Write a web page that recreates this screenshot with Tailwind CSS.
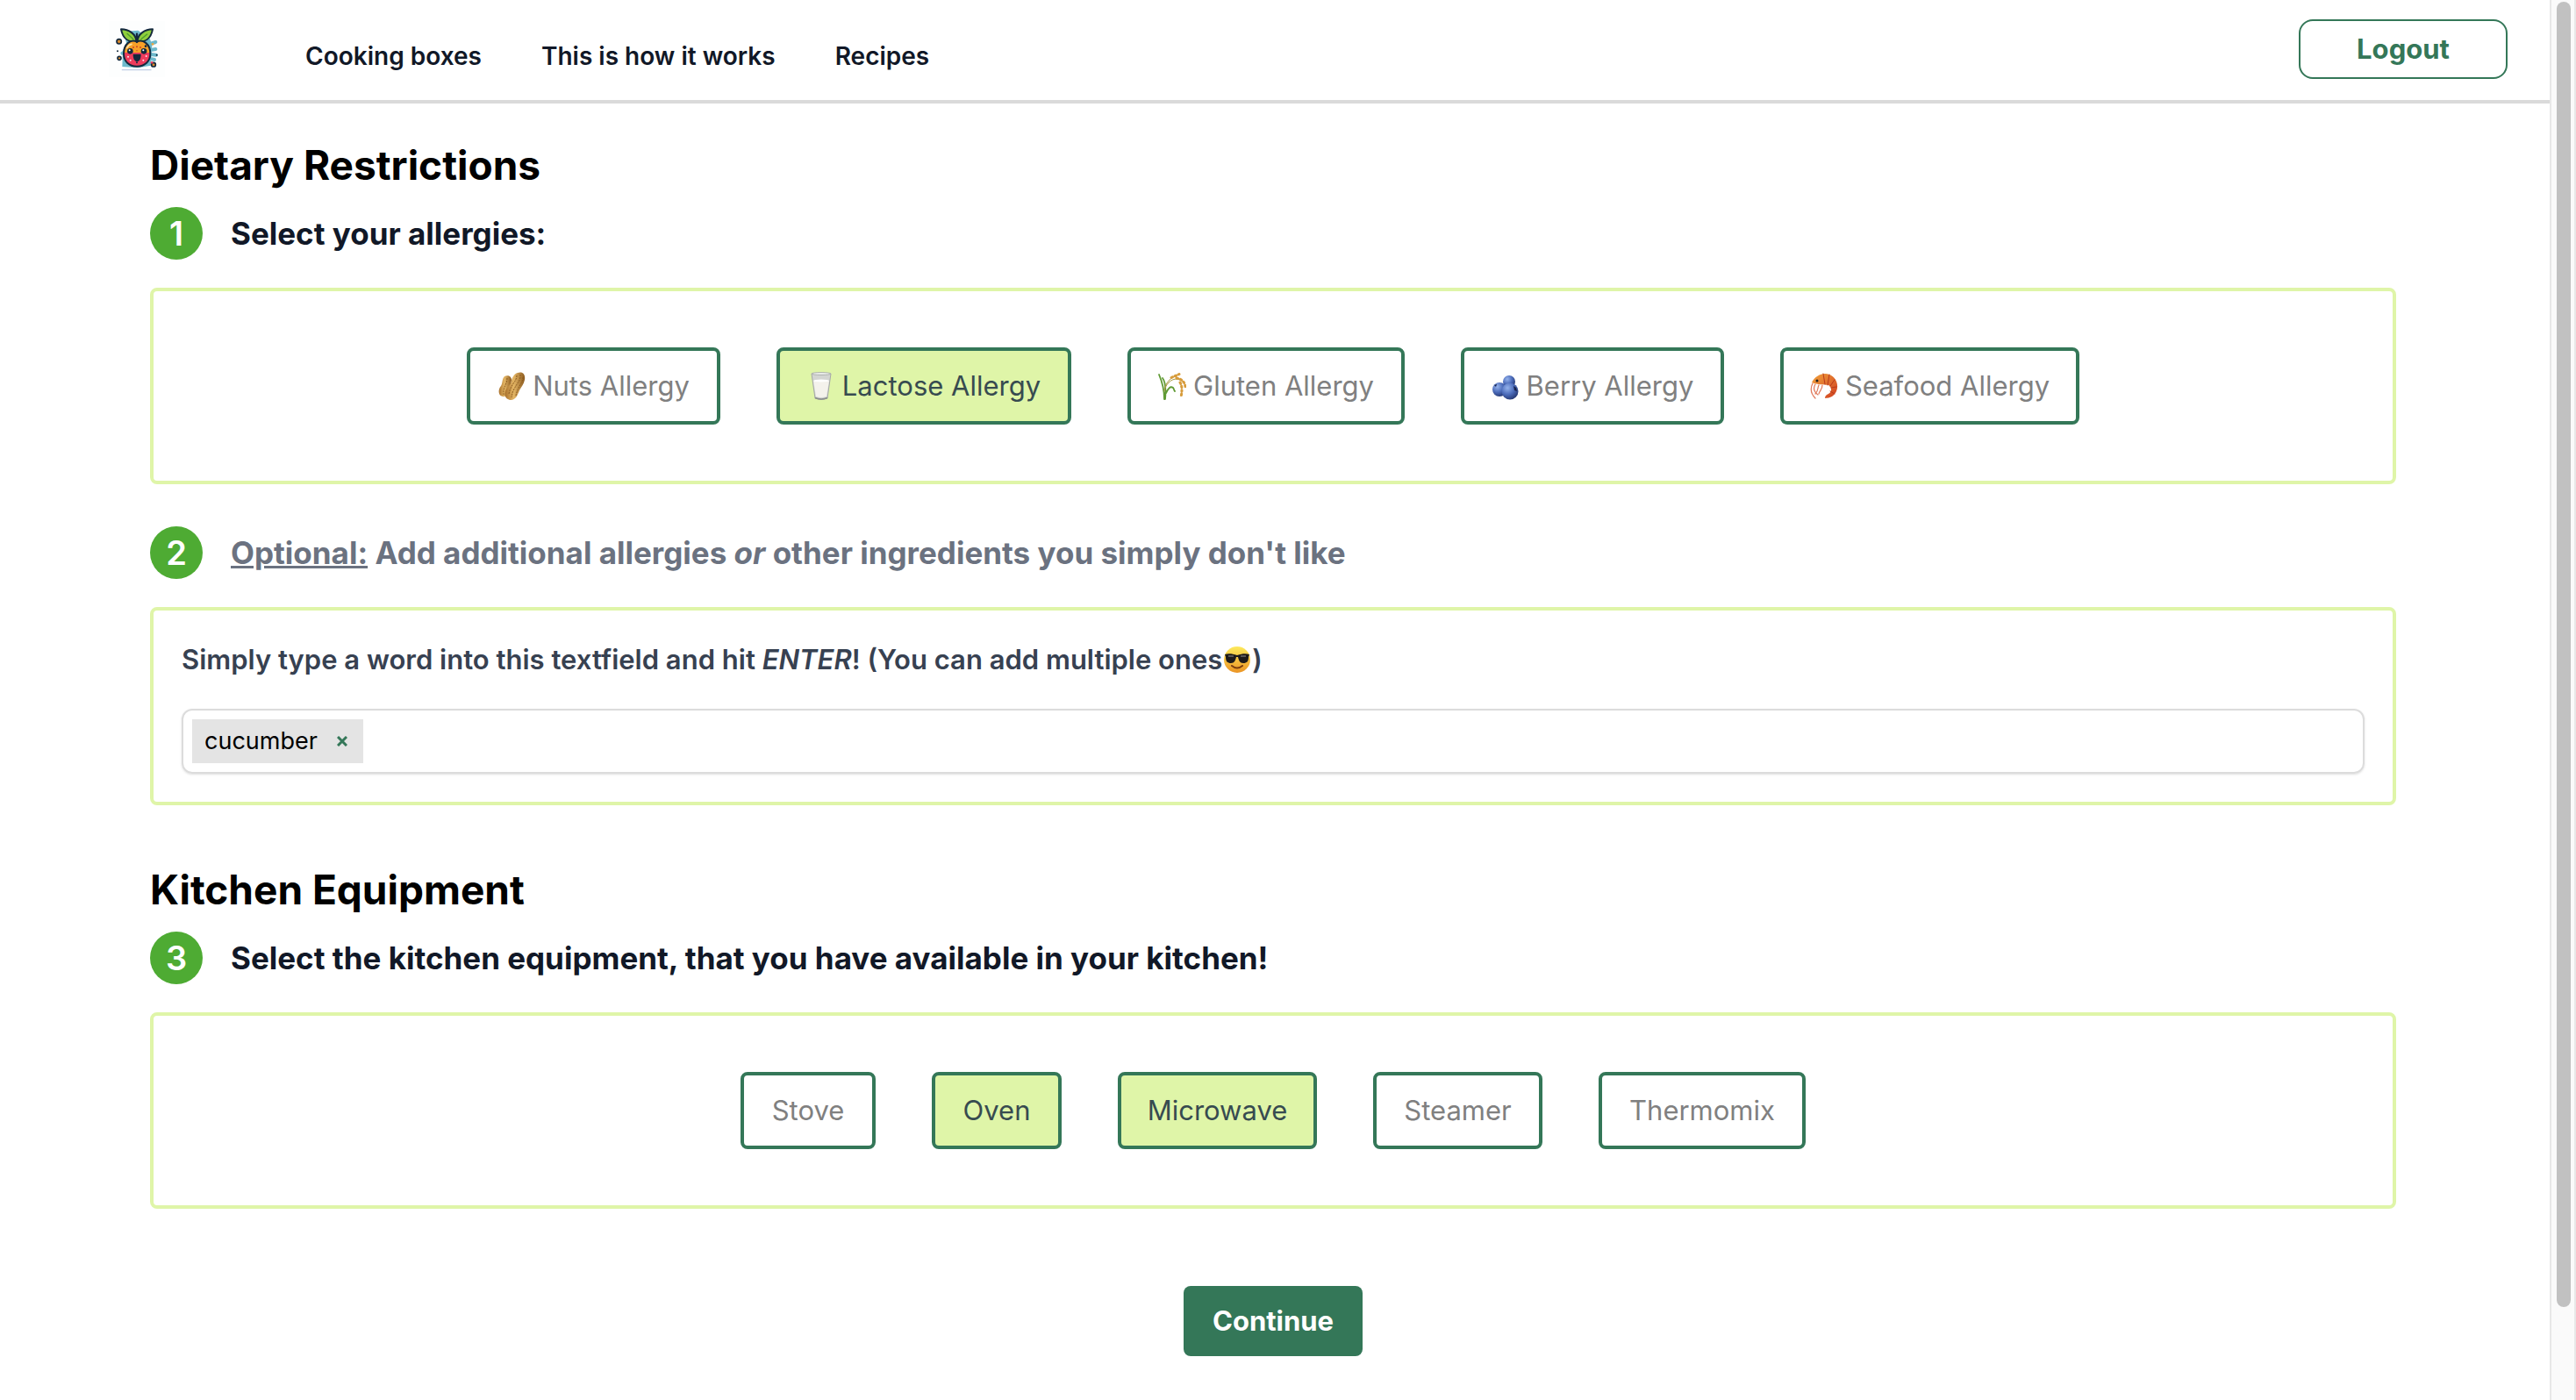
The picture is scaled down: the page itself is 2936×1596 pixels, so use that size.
<!DOCTYPE html>
<html lang="en">
<head>
<meta charset="utf-8">
<meta name="viewport" content="width=device-width, initial-scale=1">
<title>Dietary Restrictions</title>
<script src="https://cdn.jsdelivr.net/npm/@tailwindcss/browser@4"></script>
</head>
<body class="flex min-h-screen bg-white font-['Inter',sans-serif] text-[#111827]">

<div class="min-w-0 flex-1">
  <header class="flex h-[118px] items-start border-b-4 border-[#dadada] pr-12 pl-31">
    <a href="#" aria-label="Home" class="mt-6 mr-40 block size-16 shrink-0">
      <svg viewBox="0 0 192 192" class="size-full">
        <rect width="192" height="192" fill="#fdfefe"/>
        <g fill="none" stroke="#6db9cc" stroke-linecap="round" stroke-width="12">
          <path d="M142 78l18-6M148 98l12-2M144 114l18 2M50 108l-4 2M148 130l8 2"/>
        </g>
        <path d="M52 36 100 32 140 60 148 80 144 152 100 160 46 156 48 100 60 76Z" fill="#6db9cc"/>
        <path d="M42 28c26 0 52 16 52 42-26 4-46-10-52-42z" fill="#8fce3c" stroke="#14293d" stroke-width="6" stroke-linejoin="round"/>
        <path d="M150 28c-26 0-52 16-52 42 26 4 46-10 52-42z" fill="#8fce3c" stroke="#14293d" stroke-width="6" stroke-linejoin="round"/>
        <path d="M62 42 84 62M132 44 110 62" stroke="#4c9a2c" stroke-width="4"/>
        <path d="M96 71C76 60 51 78 51 112c0 26 18 43 45 43s46-17 46-43c0-34-26-52-46-41z" fill="#f8a028"/>
        <path d="M51 108c0 30 18 47 45 47s46-17 46-47z" fill="#ee3b5c"/>
        <path d="M62 92c4-8 10-12 16-13" stroke="#ffe1a0" stroke-width="5" fill="none" stroke-linecap="round"/>
        <path d="M96 71C76 60 51 78 51 112c0 26 18 43 45 43s46-17 46-43c0-34-26-52-46-41z" fill="none" stroke="#14293d" stroke-width="6"/>
        <path d="M96 72V44" stroke="#14293d" stroke-width="7" stroke-linecap="round"/>
        <circle cx="73" cy="103" r="10" fill="#14293d"/><circle cx="120" cy="103" r="10" fill="#14293d"/>
        <circle cx="71" cy="100" r="3" fill="#fff"/><circle cx="118" cy="100" r="3" fill="#fff"/>
        <path d="M83 113h27c0 16-5 25-13.500 25S83 129 83 113z" fill="#14293d"/>
        <g fill="#c8442a"><circle cx="84" cy="90" r="3"/><circle cx="96" cy="88" r="3"/><circle cx="108" cy="90" r="3"/><circle cx="96" cy="101" r="2"/></g>
        <g fill="#14293d"><circle cx="126" cy="86" r="4"/><circle cx="96" cy="142" r="3"/><circle cx="30" cy="103" r="3"/><circle cx="164" cy="116" r="3"/></g>
        <g fill="#ffe3ea"><circle cx="66" cy="122" r="3"/><circle cx="74" cy="134" r="3"/><circle cx="118" cy="134" r="3"/><circle cx="128" cy="120" r="3"/></g>
        <g fill="#d98a2e" stroke="#14293d" stroke-width="5"><circle cx="35" cy="70" r="8"/><circle cx="36" cy="127" r="6"/><circle cx="153" cy="149" r="7"/></g>
        <circle cx="147" cy="142" r="4" fill="#ee3b5c"/><circle cx="150" cy="79" r="4" fill="#f0a63c"/>
        <path d="M46 167h98" stroke="#c3cfe6" stroke-width="4" stroke-linecap="round"/>
      </svg>
    </a>
    <nav class="mt-11 flex gap-17 text-[28px] leading-10 font-semibold whitespace-nowrap">
      <a href="#">Cooking boxes</a>
      <a href="#">This is how it works</a>
      <a href="#">Recipes</a>
    </nav>
    <button type="button" class="mt-[22px] ml-auto h-[68px] w-[238px] rounded-2xl border-2 border-[#347758] text-[31px] leading-10 font-bold text-[#347758]">Logout</button>
  </header>

  <main class="pt-[38px] pr-1 pb-12">
    <div class="mx-auto max-w-[2560px]">
      <h1 class="text-[46px] leading-16 font-bold text-black">Dietary Restrictions</h1>

      <section class="mt-4">
        <div class="flex items-center gap-8">
          <span class="flex size-15 items-center justify-center rounded-full bg-[#4eab33] text-[38px] font-semibold text-white">1</span>
          <h2 class="text-[35px] leading-12 font-bold">Select your allergies:</h2>
        </div>
        <div class="mt-8 flex justify-center gap-16 rounded-lg border-4 border-[#dff5a8] py-16 text-[31px] whitespace-nowrap text-[#808080]">
          <button type="button" aria-pressed="false" class="flex h-22 w-[289px] items-center justify-center gap-2 rounded-lg border-4 border-[#347758]">
            <svg viewBox="0 0 32 32" class="size-8 shrink-0">
              <defs><linearGradient id="nut" x1="0" x2="1"><stop offset="0" stop-color="#a8712c"/><stop offset=".45" stop-color="#e3b564"/><stop offset="1" stop-color="#8c5a1e"/></linearGradient></defs>
              <path d="M8 5c4-2 8 0 8 4s-2 6-3 10c-1 5-3 10-7 9-6-1-5-9-2-12 2-3 1-8 4-11z" fill="url(#nut)"/>
              <path d="M23 1c6-2 9 2 8 8-1 5-4 8-6 12-2 5-4 11-10 11-8-1-8-9-4-14 2-3 4-3 5-8 1-4 3-8 7-9z" fill="url(#nut)"/>
              <path d="M26 3c1 9-8 12-10 26M29 6c0 7-6 10-8 21M22 4c0 7-7 10-9 21M11 7c0 7-5 10-4 19" stroke="#8a5a20" stroke-width="1" stroke-dasharray="2 1" fill="none"/>
            </svg>
            <span>Nuts Allergy</span>
          </button>
          <button type="button" aria-pressed="true" class="flex h-22 w-[336px] items-center justify-center gap-2 rounded-lg border-4 border-[#347758] bg-[#dff5a8] text-[#374b50]">
            <svg viewBox="0 0 32 32" class="size-8 shrink-0">
              <path d="M5 2h22l-4 28q-7 3-14 0z" fill="#d3d5d2" stroke="#a5a8a6"/>
              <path d="M7 10h18l-3 18q-6 2-12 0z" fill="#f4f2ec"/>
              <ellipse cx="16" cy="10" rx="9" ry="1.500" fill="#fff"/>
              <ellipse cx="16" cy="2" rx="11" ry="1.500" fill="#e9ebe9" stroke="#a5a8a6" stroke-width=".8"/>
              <path d="M9 29.500q7 3 14 0" stroke="#8b8e8c" stroke-width="1.500" fill="none"/>
            </svg>
            <span>Lactose Allergy</span>
          </button>
          <button type="button" aria-pressed="false" class="flex h-22 w-[316px] items-center justify-center gap-2 rounded-lg border-4 border-[#347758]">
            <svg viewBox="0 0 32 32" class="size-8 shrink-0" fill="none" stroke-linecap="round">
              <path d="M7 31C7 20 4 10 1 3M8 31C9 20 9 12 5 7M9 24c3-6 5-8 8-6 1 1 1 3 2 4" stroke="#5f9a34" stroke-width="1.800"/>
              <path d="M7 22C8 13 13 6 24 3M8 18C13 8 20 6 27 10" stroke="#a99a45" stroke-width="1"/>
              <path d="M15 6.500l9-4M21 7c6 1 10 5 10 11M25 12c3 5 2 11 1 17" stroke="#d79c3c" stroke-width="3" stroke-dasharray="1.500 3"/>
            </svg>
            <span>Gluten Allergy</span>
          </button>
          <button type="button" aria-pressed="false" class="flex h-22 w-[300px] items-center justify-center gap-2 rounded-lg border-4 border-[#347758]">
            <svg viewBox="0 0 32 32" class="size-8 shrink-0">
              <defs><radialGradient id="berry" cx=".35" cy=".3" r=".8"><stop offset="0" stop-color="#94b2ec"/><stop offset=".5" stop-color="#4c6cba"/><stop offset="1" stop-color="#1f2f66"/></radialGradient></defs>
              <circle cx="20" cy="11" r="7" fill="url(#berry)"/>
              <circle cx="9" cy="20" r="8" fill="url(#berry)"/>
              <circle cx="21" cy="22" r="9.500" fill="url(#berry)"/>
              <path d="M25 16l3 2 1 4-3-1zM3 15l3-1-1 3z" fill="#17224d"/>
            </svg>
            <span>Berry Allergy</span>
          </button>
          <button type="button" aria-pressed="false" class="flex h-22 w-[341px] items-center justify-center gap-2 rounded-lg border-4 border-[#347758]">
            <svg viewBox="0 0 32 32" class="size-8 shrink-0" fill="none" stroke-linecap="round">
              <defs><linearGradient id="shrimp" x1="0" y1="0" x2="1" y2="1"><stop offset="0" stop-color="#f2a33c"/><stop offset="1" stop-color="#cf3d20"/></linearGradient></defs>
              <path d="M2 12C6 4 15 0 22 3c8 3 11 12 8 19-2 5-7 8-13 8 0-3 2-4 4-5 4-2 4-8 0-10-6-1-12 0-19-3z" fill="url(#shrimp)"/>
              <path d="M15 2l2 12M22 3l-2 12M28 9l-5 7M30 17l-6 1M28 25l-5-3" stroke="#b83a1b" stroke-width="1"/>
              <path d="M3 13c-3 6-2 12 3 17M6 14c-3 5-1 9 3 12M10 15c-2 4 0 6-4 10M14 15c0 5-3 6-4 10" stroke="#e0785a" stroke-width="1.200"/>
              <circle cx="8" cy="10" r="1.500" fill="#222"/>
            </svg>
            <span>Seafood Allergy</span>
          </button>
        </div>
      </section>

      <section class="mt-12">
        <div class="flex items-center gap-8">
          <span class="flex size-15 items-center justify-center rounded-full bg-[#4eab33] text-[38px] font-semibold text-white">2</span>
          <h2 class="text-[35px] leading-12 font-bold text-[#6b7280]"><span class="underline">Optional:</span> Add additional allergies <em>or</em> other ingredients you simply don't like</h2>
        </div>
        <div class="mt-8 rounded-lg border-4 border-[#dff5a8] px-8 pt-8 pb-8">
          <label for="ingredient" class="flex items-center text-[31px] leading-12 font-semibold text-[#374151]">
            <span>Simply type a word into this textfield and hit <em>ENTER</em>! (You can add multiple ones</span>
            <svg viewBox="0 0 32 32" class="mx-px size-8 shrink-0">
              <defs><linearGradient id="face" x1="0" x2="0" y1="0" y2="1"><stop offset="0" stop-color="#fdea5c"/><stop offset="1" stop-color="#eb9424"/></linearGradient></defs>
              <circle cx="16" cy="16" r="15" fill="url(#face)"/>
              <path d="M2 10c4-1 8-1 14 1 6-2 10-2 14-1l-1 3c0 5-2 7-6 7s-5-3-6-7h-2c-1 4-2 7-6 7s-6-2-6-7z" fill="#1d1b1a"/>
              <path d="M6 12l6 0M20 12l6 0" stroke="#6c6c6c" stroke-width="1.500"/>
              <path d="M10 23q6 5 12 0" stroke="#7b3d10" stroke-width="2" fill="none" stroke-linecap="round"/>
            </svg>
            <span>)</span>
          </label>
          <div class="mt-8 flex h-[74px] items-center rounded-xl border-2 border-[#dcdcdc] px-[10px] shadow-sm">
            <span class="flex h-[50px] items-center gap-5 bg-[#e4e4e4] pr-4 pl-[14px] text-[27px] text-black">
              cucumber
              <button type="button" aria-label="Remove cucumber" class="flex size-4 items-center justify-center">
                <svg viewBox="0 0 12 12" class="size-3" stroke="#347758" stroke-width="3"><path d="M1 1 11 11M11 1 1 11"/></svg>
              </button>
            </span>
            <input id="ingredient" type="text" class="h-full min-w-0 flex-1 px-3 text-[27px] outline-none">
          </div>
        </div>
      </section>

      <h1 class="mt-16 text-[46px] leading-16 font-bold text-black">Kitchen Equipment</h1>

      <section class="mt-4">
        <div class="flex items-center gap-8">
          <span class="flex size-15 items-center justify-center rounded-full bg-[#4eab33] text-[38px] font-semibold text-white">3</span>
          <h2 class="text-[35px] leading-12 font-bold">Select the kitchen equipment, that you have available in your kitchen!</h2>
        </div>
        <div class="mt-8 flex justify-center gap-16 rounded-lg border-4 border-[#dff5a8] py-16 text-[31px] text-[#808080]">
          <button type="button" aria-pressed="false" class="h-22 w-[154px] rounded-lg border-4 border-[#347758]">Stove</button>
          <button type="button" aria-pressed="true" class="h-22 w-[148px] rounded-lg border-4 border-[#347758] bg-[#dff5a8] text-[#374b50]">Oven</button>
          <button type="button" aria-pressed="true" class="h-22 w-[227px] rounded-lg border-4 border-[#347758] bg-[#dff5a8] text-[#374b50]">Microwave</button>
          <button type="button" aria-pressed="false" class="h-22 w-[193px] rounded-lg border-4 border-[#347758]">Steamer</button>
          <button type="button" aria-pressed="false" class="h-22 w-[236px] rounded-lg border-4 border-[#347758]">Thermomix</button>
        </div>
      </section>

      <div class="mt-22 flex justify-center">
        <button type="button" class="h-20 w-[204px] rounded-lg bg-[#347758] text-[31px] font-bold text-white">Continue</button>
      </div>
    </div>
  </main>
</div>

<div aria-hidden="true" class="sticky top-0 flex h-screen w-[30px] shrink-0 flex-col items-center border-x-2 border-[#e8e8e8] bg-[#fafafa] pt-[2px] pl-[2px]">
  <div class="h-14/15 w-4 rounded-full bg-[#c1c1c1]"></div>
</div>

</body>
</html>
